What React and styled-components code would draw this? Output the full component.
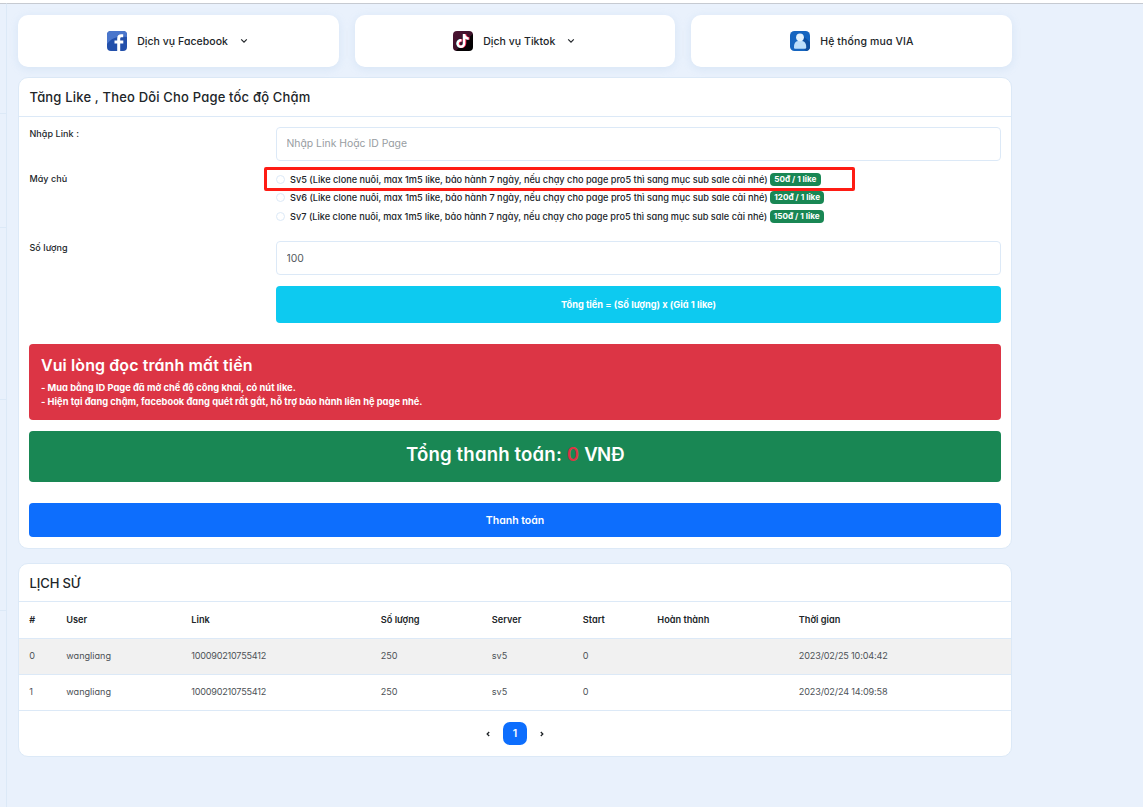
import React, { useState } from "react";
import styled, { createGlobalStyle } from "styled-components";
import { FaTiktok } from "react-icons/fa6";

const line = "#dce9f7";

const GlobalStyle = createGlobalStyle`
  * {
    box-sizing: border-box;
  }
  body {
    margin: 0;
    background: #e9f1fc;
    font-family: "Inter", "Open Sans", sans-serif;
    font-feature-settings: "cv11";
    font-size: 9px;
    color: #212529;
  }
`;

const Page = styled.div`
  display: flex;
  height: 807px;
  border-top: 3px solid #fff;
  overflow: hidden;
`;

const Sidebar = styled.div`
  width: 7px;
  border-top: 1px solid #c6cad1;
  border-right: 1px solid ${line};
`;

const SideItem = styled.div`
  height: ${(props) => props.$height}px;
  border-bottom: 1px solid ${line};
`;

const Main = styled.main`
  flex: 1;
  padding: 11px 131px 0 11px;
  border-top: 1px solid #c6cad1;
`;

const Nav = styled.nav`
  display: grid;
  grid-template-columns: repeat(3, 1fr);
  gap: 16px;
  margin-bottom: 10px;
`;

const NavCard = styled.a`
  display: flex;
  align-items: center;
  justify-content: center;
  height: 52px;
  border-radius: 10px;
  background: #fff;
  box-shadow: 0 2px 9px rgba(150, 185, 225, 0.22);
  font-size: 10.5px;
  font-weight: 500;
  letter-spacing: ${(props) => props.$spacing || 0.04}px;
  svg:first-child {
    margin-right: 10.5px;
  }
`;

const Chevron = styled.svg`
  width: 8px;
  height: 6px;
  margin-left: 12px;
  margin-right: 2px;
`;

const TiktokBox = styled.span`
  position: relative;
  width: 20px;
  height: 20px;
  margin-right: 10.5px;
  border-radius: 4px;
  background: linear-gradient(135deg, #4d1433 0%, #3d1029 55%, #080205 58%, #000 100%);
`;

const TiktokNote = styled(FaTiktok)`
  position: absolute;
  top: 3px;
  left: ${(props) => props.$left}px;
  width: 13px;
  height: 14px;
`;

const Panel = styled.section`
  margin-bottom: ${(props) => props.$gap || 0}px;
  border: 1px solid ${line};
  border-radius: 10px;
  background: #fff;
  overflow: hidden;
`;

const PanelTitle = styled.h2`
  margin: 0;
  height: ${(props) => props.$height}px;
  padding-left: 10.5px;
  border-bottom: 1px solid ${line};
  font-size: 13px;
  font-weight: 500;
  line-height: 38px;
  letter-spacing: ${(props) => props.$spacing}px;
`;

const PanelBody = styled.div`
  padding: 10px 10px 11px;
`;

const FormRow = styled.div`
  display: grid;
  grid-template-columns: 247px 1fr;
  margin-bottom: ${(props) => props.$gap}px;
`;

const Label = styled.label`
  padding-top: ${(props) => props.$top || 0}px;
  padding-left: 0.4px;
  line-height: 13px;
  font-weight: 500;
  letter-spacing: 0.08px;
`;

const Input = styled.input`
  width: 100%;
  height: 34px;
  padding: 0 9.5px;
  border: 1px solid ${line};
  border-radius: 4px;
  background: #fff;
  outline: none;
  color: #555b60;
  font-family: inherit;
  font-feature-settings: inherit;
  font-size: 10.4px;
  &::placeholder {
    color: #989da2;
    opacity: 1;
  }
`;

const LinkInput = styled(Input)`
  padding-bottom: 2px;
`;

const Option = styled.label`
  position: relative;
  display: flex;
  align-items: center;
  height: 18.5px;
  font-size: 9.2px;
  font-weight: 500;
  white-space: nowrap;
`;

const Radio = styled.input`
  appearance: none;
  width: 9px;
  height: 9px;
  margin: 0 5px 0 0;
  border: 1px solid ${line};
  border-radius: 50%;
  background: #fff;
  &:checked {
    border-color: #0d6efd;
    background: #0d6efd;
  }
`;

const Badge = styled.span`
  height: 13px;
  margin-left: 2.4px;
  padding: 0 4.2px;
  border-radius: 4px;
  background: #198754;
  color: #fff;
  font-size: 8.2px;
  font-weight: 700;
  line-height: 13px;
`;

const Marker = styled.span`
  position: absolute;
  top: -3px;
  left: -12px;
  width: 591px;
  height: 24px;
  border: 3px solid #fe1c14;
  border-radius: 2px;
  pointer-events: none;
`;

const Formula = styled.div`
  height: 37px;
  margin: 0 0 21px 247px;
  border-radius: 4px;
  background: #0dcaf0;
  color: #fff;
  font-size: 9.25px;
  font-weight: 700;
  line-height: 37px;
  text-align: center;
`;

const Warning = styled.div`
  height: 76px;
  margin-bottom: 11px;
  padding: 11px 12px;
  border-radius: 4px;
  background: #dc3545;
  color: #fff;
  font-size: 9.3px;
  font-weight: 700;
  line-height: 14px;
  letter-spacing: 0.02px;
`;

const WarningTitle = styled.h4`
  margin: 0 0 6px;
  font-size: 16px;
  font-weight: 600;
  line-height: 20px;
  letter-spacing: 0.09px;
`;

const Total = styled.div`
  height: 51px;
  margin-bottom: 21px;
  border-radius: 4px;
  background: #198754;
  color: #fff;
  font-size: 18.6px;
  font-weight: 600;
  line-height: 47px;
  text-align: center;
  letter-spacing: 0.16px;
  span {
    color: #dc3545;
  }
`;

const Currency = styled.b`
  font-weight: 600;
  letter-spacing: -0.6px;
`;

const PayButton = styled.button`
  display: block;
  width: 100%;
  height: 34px;
  padding: 0;
  border: none;
  border-radius: 4px;
  background: #0d6efd;
  color: #fff;
  font-family: inherit;
  font-feature-settings: inherit;
  font-size: 10.5px;
  font-weight: 600;
`;

const Table = styled.table`
  width: 100%;
  border-collapse: separate;
  border-spacing: 0;
  table-layout: fixed;
`;

const Th = styled.th`
  width: ${(props) => (props.$width ? `${props.$width}px` : "auto")};
  height: 37px;
  padding: 0 0 2px 10.3px;
  border-bottom: 1px solid ${line};
  font-size: 9.2px;
  font-weight: 600;
  text-align: left;
`;

const Td = styled.td`
  height: 36px;
  padding: 0 0 2px 10.3px;
  border-bottom: 1px solid ${line};
  color: #4d5257;
  font-size: 9.1px;
  letter-spacing: ${(props) => props.$spacing || 0}px;
`;

const Tr = styled.tr`
  background: ${(props) => (props.$striped ? "#f1f1f1" : "#fff")};
`;

const Pagination = styled.div`
  display: flex;
  align-items: center;
  justify-content: center;
  gap: 13px;
  height: 45px;
`;

const PageNumber = styled.span`
  width: 24px;
  height: 23px;
  border-radius: 7px;
  background: #0d6efd;
  color: #fff;
  font-size: 10.5px;
  font-weight: 600;
  line-height: 23px;
  text-align: center;
`;

const FacebookIcon = () => (
  <svg width="20" height="20" viewBox="0 0 20 20">
    <defs>
      <clipPath id="fb">
        <rect width="20" height="20" rx="4" />
      </clipPath>
    </defs>
    <g clipPath="url(#fb)">
      <rect width="20" height="20" fill="#2350ab" />
      <path d="M0 0h20v6C12 4 4 7 0 13z" fill="#4a76cc" />
      <path
        d="M11.7 20V7.5q0-2.7 2.7-2.7h1.8M7.5 11.1h8.8"
        fill="none"
        stroke="#fff"
        strokeWidth="3"
      />
    </g>
  </svg>
);

const UserIcon = () => (
  <svg width="20" height="20" viewBox="0 0 20 20">
    <rect width="20" height="20" rx="4.5" fill="#1565c0" />
    <path d="M13 5l7 6v6q-1 3-4 3l-3-3z" fill="#0d4fa0" />
    <path d="M4 16.5q0-6.5 4-6.5h4q4.2 0 4.2 6.5 0 1.2-1.2 1.2H5q-1 0-1-1.2z" fill="#bbdefb" />
    <circle cx="10" cy="6.3" r="3.9" fill="#e3f2fd" />
  </svg>
);

const Down = () => (
  <Chevron viewBox="0 0 8 6">
    <path d="M1.2 1.4L4 4.1l2.8-2.7" fill="none" stroke="#212529" strokeWidth="1.2" />
  </Chevron>
);

const servers = [
  { id: "Sv5", price: "50đ" },
  { id: "Sv6", price: "120đ" },
  { id: "Sv7", price: "150đ" },
];

const columns = [
  ["#", 37],
  ["User", 125],
  ["Link", 189.5],
  ["Số lượng", 111],
  ["Server", 91],
  ["Start", 74.5],
  ["Hoàn thành", 141.5],
  ["Thời gian"],
];

const history = [
  { user: "wangliang", link: "100090210755412", amount: 250, server: "sv5", start: 0, time: "2023/02/25 10:04:42" },
  { user: "wangliang", link: "100090210755412", amount: 250, server: "sv5", start: 0, time: "2023/02/24 14:09:58" },
];

const App = () => {
  const [link, setLink] = useState("");
  const [amount, setAmount] = useState("100");
  const [server, setServer] = useState("");
  return (
    <>
      <GlobalStyle />
      <Page>
        <Sidebar>
          <SideItem $height={110} />
          <SideItem $height={114} />
          <SideItem $height={172} />
          <SideItem $height={211} />
        </Sidebar>
        <Main>
          <Nav>
            <NavCard>
              <FacebookIcon />
              Dịch vụ Facebook
              <Down />
            </NavCard>
            <NavCard>
              <TiktokBox>
                <TiktokNote $left={3} color="#25f4ee" />
                <TiktokNote $left={4.4} color="#fe2c55" />
                <TiktokNote $left={3.7} color="#fff" />
              </TiktokBox>
              Dịch vụ Tiktok
              <Down />
            </NavCard>
            <NavCard $spacing={0.13}>
              <UserIcon />
              Hệ thống mua VIA
            </NavCard>
          </Nav>
          <Panel $gap={14}>
            <PanelTitle $height={39} $spacing={0.18}>
              Tăng Like , Theo Dõi Cho Page tốc độ Chậm
            </PanelTitle>
            <PanelBody>
              <FormRow $gap={9}>
                <Label>Nhập Link :</Label>
                <LinkInput
                  value={link}
                  onChange={(event) => setLink(event.target.value)}
                  placeholder="Nhập Link Hoặc ID Page"
                />
              </FormRow>
              <FormRow $gap={15.5}>
                <Label $top={2}>Máy chủ</Label>
                <div>
                  {servers.map(({ id, price }) => (
                    <Option key={id}>
                      <Radio
                        type="radio"
                        name="server"
                        checked={server === id}
                        onChange={() => setServer(id)}
                      />
                      {id} (Like clone nuôi, max 1m5 like, bảo hành 7 ngày, nếu
                      chạy cho page pro5 thì sang mục sub sale cài nhé)
                      <Badge>{price} / 1 like</Badge>
                      {id === "Sv5" && <Marker />}
                    </Option>
                  ))}
                </div>
              </FormRow>
              <FormRow $gap={11}>
                <Label>Số lượng</Label>
                <Input
                  value={amount}
                  onChange={(event) => setAmount(event.target.value)}
                />
              </FormRow>
              <Formula>Tổng tiền = (Số lượng) x (Giá 1 like)</Formula>
              <Warning>
                <WarningTitle>Vui lòng đọc tránh mất tiền</WarningTitle>
                - Mua bằng ID Page đã mở chế độ công khai, có nút like.
                <br />- Hiện tại đang chậm, facebook đang quét rất gắt, hỗ trợ
                bảo hành liên hệ page nhé.
              </Warning>
              <Total>
                Tổng thanh toán: <span>0</span> <Currency>VNĐ</Currency>
              </Total>
              <PayButton>Thanh toán</PayButton>
            </PanelBody>
          </Panel>
          <Panel>
            <PanelTitle $height={38} $spacing={-0.1}>
              LỊCH SỬ
            </PanelTitle>
            <Table>
              <thead>
                <tr>
                  {columns.map(([name, width]) => (
                    <Th key={name} $width={width}>
                      {name}
                    </Th>
                  ))}
                </tr>
              </thead>
              <tbody>
                {history.map((item, index) => (
                  <Tr key={index} $striped={index % 2 === 0}>
                    <Td>{index}</Td>
                    <Td>{item.user}</Td>
                    <Td $spacing={-0.23}>{item.link}</Td>
                    <Td>{item.amount}</Td>
                    <Td>{item.server}</Td>
                    <Td>{item.start}</Td>
                    <Td />
                    <Td $spacing={-0.15}>{item.time}</Td>
                  </Tr>
                ))}
              </tbody>
            </Table>
            <Pagination>
              <svg width="4" height="6" viewBox="0 0 4 6">
                <path d="M3.2 1L1.2 3l2 2" fill="none" stroke="#212529" strokeWidth="1.3" />
              </svg>
              <PageNumber>1</PageNumber>
              <svg width="4" height="6" viewBox="0 0 4 6">
                <path d="M.8 1l2 2-2 2" fill="none" stroke="#212529" strokeWidth="1.3" />
              </svg>
            </Pagination>
          </Panel>
        </Main>
      </Page>
    </>
  );
};

export default App;
